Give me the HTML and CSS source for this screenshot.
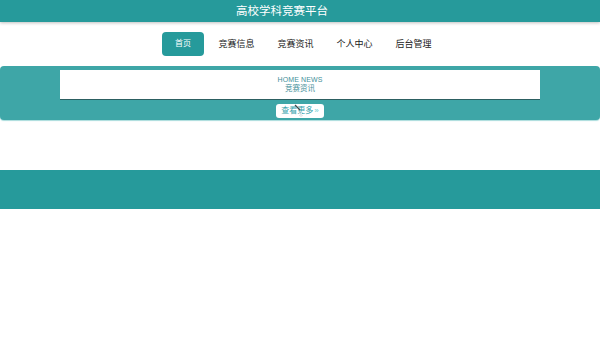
FILE: index.html
```html
<!DOCTYPE html>
<html lang="zh-CN">
<head>
    <meta charset="UTF-8">
    <meta name="viewport" content="width=device-width, initial-scale=1.0">
    <title>高校学科竞赛平台</title>
    <link rel="stylesheet" href="styles.css">
</head>
<body>
    <div class="header">
        <h1>高校学科竞赛平台</h1>
    </div>

    <div class="nav">
        <a class="nav-item active" href="#">首页</a>
        <a class="nav-item" href="#">竞赛信息</a>
        <a class="nav-item" href="#">竞赛资讯</a>
        <a class="nav-item" href="#">个人中心</a>
        <a class="nav-item" href="#">后台管理</a>
    </div>

    <div class="news-banner">
        <div class="news-title">
            <p class="title-en">HOME NEWS</p>
            <p class="title-cn">竞赛资讯</p>
        </div>
        <a class="more-btn" href="#">查看更多<span class="arrow">&raquo;</span>
            <svg class="cursor-mark" width="14" height="14" viewBox="0 0 14 14">
                <line x1="3" y1="1" x2="8" y2="6" stroke="#3d4a4c" stroke-width="1.2"/>
                <line x1="9" y1="7" x2="9" y2="13" stroke="#d8dde0" stroke-width="1"/>
                <line x1="7" y1="9" x2="11" y2="12" stroke="#e2e6e8" stroke-width="1"/>
                <line x1="11" y1="8" x2="7" y2="12" stroke="#e2e6e8" stroke-width="1"/>
            </svg>
        </a>
    </div>

    <div class="footer"></div>
</body>
</html>
```

FILE: styles.css
```css
* {
    margin: 0;
    padding: 0;
    box-sizing: border-box;
}

body {
    font-family: "Liberation Sans", "Noto Sans CJK SC", sans-serif;
    background: #ffffff;
    color: #333;
}

a {
    text-decoration: none;
}

.header {
    background: #269a9b;
    height: 22px;
    box-shadow: 0 1px 3px rgba(0, 0, 0, 0.25);
    text-align: center;
    padding-right: 36px;
}

.header h1 {
    color: #ffffff;
    font-size: 11.5px;
    font-weight: 400;
    line-height: 22px;
}

.nav {
    display: flex;
    justify-content: center;
    margin-top: 10px;
    padding-left: 5px;
}

.nav-item {
    height: 24px;
    line-height: 24px;
    padding: 0 11.5px;
    font-size: 9px;
    color: #222;
}

.nav-item.active {
    background: #269a9b;
    color: #ffffff;
    font-size: 8px;
    border-radius: 4px;
    padding: 0 13px;
    margin-right: 3px;
}

.news-banner {
    margin-top: 10px;
    height: 54px;
    background: #3ea6a7;
    border-radius: 4px;
    box-shadow: 0 1px 1px #a9dcdc;
    padding-top: 4px;
    display: flex;
    flex-direction: column;
    align-items: center;
}

.news-title {
    width: 480px;
    height: 30px;
    background: #ffffff;
    border-bottom: 1px solid #2c5f61;
    text-align: center;
    padding-top: 5px;
}

.title-en {
    font-size: 7px;
    line-height: 9px;
    letter-spacing: 0.1px;
    color: #3f8f99;
}

.title-cn {
    font-size: 7.5px;
    line-height: 10px;
    color: #3f8f99;
}

.more-btn {
    position: relative;
    margin-top: 4px;
    width: 48px;
    height: 14px;
    line-height: 14px;
    background: #ffffff;
    border-radius: 3px;
    text-align: center;
    font-size: 8px;
    color: #37a3ad;
}

.arrow {
    margin-left: 1px;
    color: #6fd0d6;
}

.cursor-mark {
    position: absolute;
    left: 16px;
    top: 0;
}

.footer {
    margin-top: 50px;
    height: 39px;
    background: #269a9b;
}
```
